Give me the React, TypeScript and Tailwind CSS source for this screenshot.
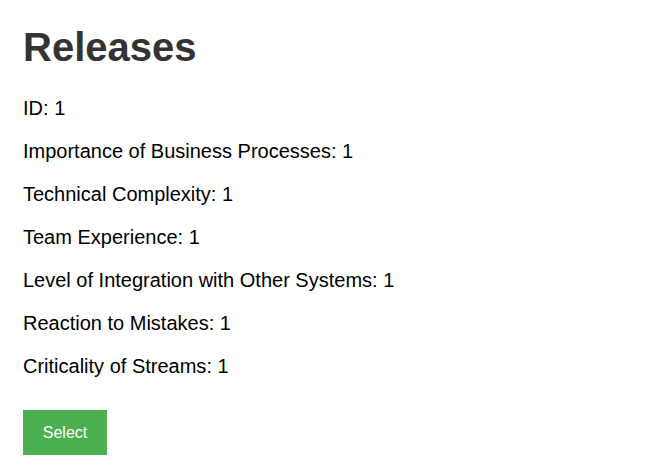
const fields = [
  ["ID", 1],
  ["Importance of Business Processes", 1],
  ["Technical Complexity", 1],
  ["Team Experience", 1],
  ["Level of Integration with Other Systems", 1],
  ["Reaction to Mistakes", 1],
  ["Criticality of Streams", 1],
] as const;

export default function App() {
  return (
    <div className="min-h-screen bg-white px-[23px] pt-[24px] font-['Liberation_Sans',Arial,sans-serif]">
      {/* TITLE */}
      <h1 className="mb-[27px] text-[40px] font-bold leading-[46px] text-[#333333]">
        Releases
      </h1>

      {/* FIELDS */}
      <div className="flex flex-col gap-[20px]">
        {fields.map(([label, value]) => (
          <p key={label} className="text-[20px] leading-[23px] text-black">
            {label}: {value}
          </p>
        ))}
      </div>

      {/* ACTION */}
      <button className="mt-[32px] h-[45px] w-[84px] bg-[#4caf50] text-[16px] text-white">
        Select
      </button>
    </div>
  );
}
